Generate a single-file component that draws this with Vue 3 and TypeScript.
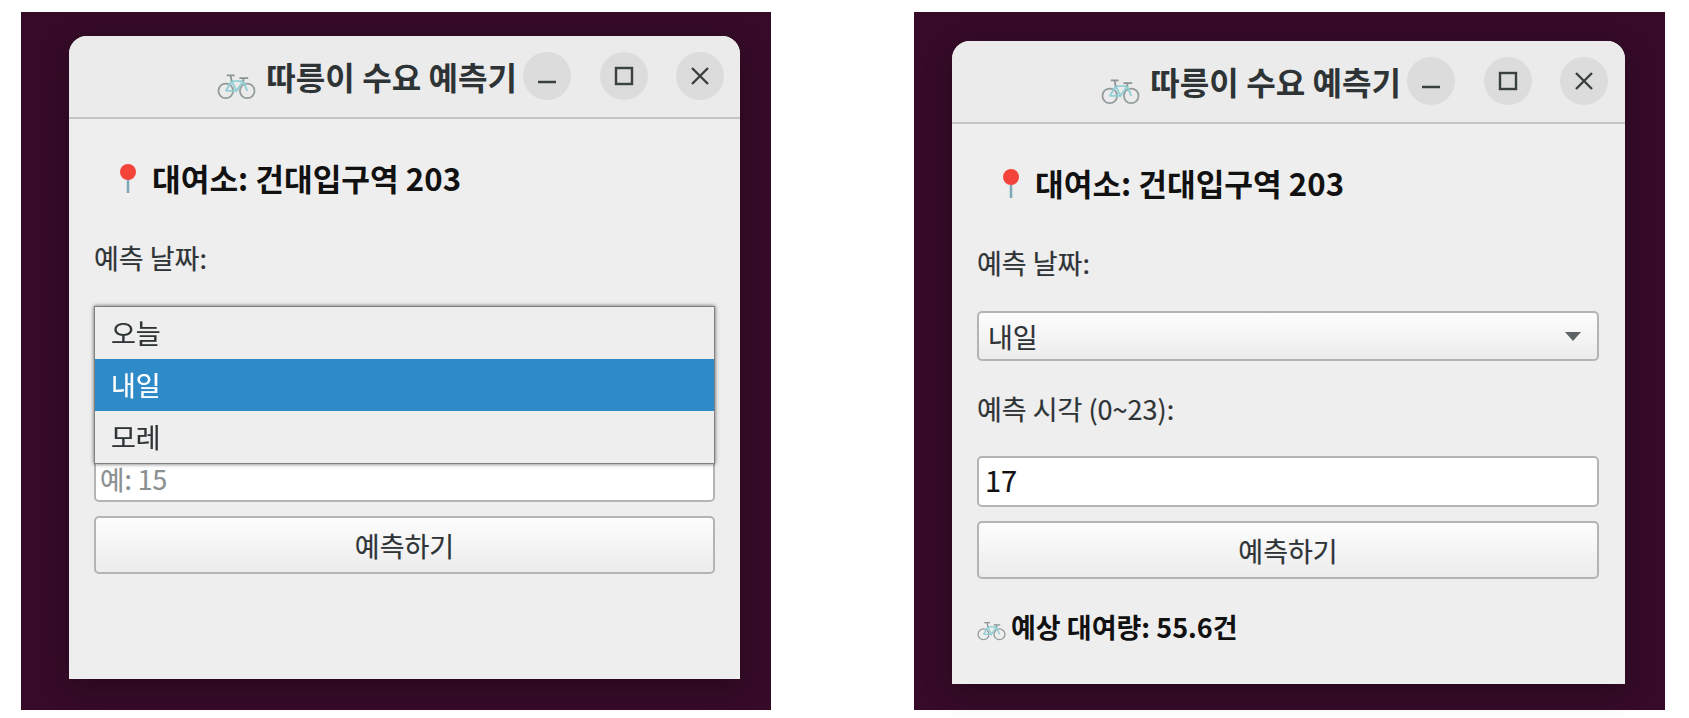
<template>
  <div class="page">
    <section
      v-for="panel in panels"
      :key="panel.id"
      class="desktop"
      :class="panel.id"
    >
      <div class="window">
        <header class="titlebar">
          <div class="title">
            <svg class="bike" viewBox="0 0 40 27">
              <circle class="wheel" cx="9" cy="18" r="7.5" />
              <circle class="wheel" cx="31" cy="18" r="7.5" />
              <path class="frame" d="M9 18 15 8H27L31 18M15 8 20 18 27 8M9 18H20" />
              <path class="bars" d="M10 2H18M14 2 15 8M23 5H32M27 5V8" />
            </svg>
            <span>따릉이 수요 예측기</span>
          </div>
          <div class="controls">
            <button class="control" aria-label="최소화">
              <svg viewBox="0 0 20 20"><path d="M1 16H19" /></svg>
            </button>
            <button class="control" aria-label="최대화">
              <svg viewBox="0 0 20 20"><rect x="2" y="2" width="16" height="16" /></svg>
            </button>
            <button class="control" aria-label="닫기">
              <svg viewBox="0 0 20 20"><path d="M2 2 18 18M18 2 2 18" /></svg>
            </button>
          </div>
        </header>

        <main class="content">
          <h1 class="station">
            <svg class="pin" viewBox="0 0 20 30">
              <path class="stem" d="M10 14V30" />
              <circle class="head" cx="10" cy="9" r="8" />
            </svg>
            <span>대여소: 건대입구역 203</span>
          </h1>

          <label class="label first">예측 날짜:</label>
          <div class="combo-wrap">
            <button class="combo">
              <span :class="{ covered: panel.open }">{{ panel.day }}</span>
              <i class="arrow"></i>
            </button>
            <ul v-if="panel.open" class="popup">
              <li
                v-for="day in days"
                :key="day"
                :class="{ selected: day === panel.day }"
              >
                {{ day }}
              </li>
            </ul>
          </div>

          <label class="label second" :class="{ covered: panel.open }">예측 시각 (0~23):</label>
          <input class="hour" :value="panel.hour" placeholder="예: 15" />
          <button class="predict">예측하기</button>

          <p v-if="panel.result" class="result">
            <svg class="bike small" viewBox="0 0 40 27">
              <circle class="wheel" cx="9" cy="18" r="7.5" />
              <circle class="wheel" cx="31" cy="18" r="7.5" />
              <path class="frame" d="M9 18 15 8H27L31 18M15 8 20 18 27 8M9 18H20" />
              <path class="bars" d="M10 2H18M14 2 15 8M23 5H32M27 5V8" />
            </svg>
            <span>{{ panel.result }}</span>
          </p>
        </main>
      </div>
    </section>
  </div>
</template>

<script setup lang="ts">
interface Panel {
  id: string
  day: string
  hour: string
  open: boolean
  result: string
}

const days: string[] = ['오늘', '내일', '모레']

const panels: Panel[] = [
  { id: 'before', day: '내일', hour: '', open: true, result: '' },
  { id: 'after', day: '내일', hour: '17', open: false, result: '예상 대여량: 55.6건' },
]
</script>

<style scoped>
.page {
  display: flex;
  justify-content: space-between;
  height: 718px;
  box-sizing: border-box;
  padding: 12px 24px 8px 21px;
  font-family: "Noto Sans CJK KR", "Noto Sans", sans-serif;
  font-size: 27px;
  color: #2e3436;
  -webkit-text-stroke: 0.2px;
  filter: blur(0.6px);
}

.desktop {
  box-sizing: border-box;
  background: #360b28;
}

.before {
  width: 750px;
  padding: 24px 0 0 48px;
}

.after {
  width: 751px;
  padding: 29px 0 0 38px;
}

.window {
  display: flex;
  flex-direction: column;
  height: 643px;
  border-radius: 18px 18px 0 0;
  background: #eeeeee;
  box-shadow: 0 8px 28px rgba(0, 0, 0, 0.28);
  overflow: hidden;
}

.before .window {
  width: 671px;
}

.after .window {
  width: 673px;
}

.titlebar {
  display: flex;
  justify-content: flex-end;
  align-items: center;
  gap: 6px;
  flex: none;
  height: 83px;
  box-sizing: border-box;
  padding: 0 16px 2px 0;
  background: #ebebeb;
  border-bottom: 2px solid #c4c4c4;
}

.after .titlebar {
  padding-right: 17px;
}

.title {
  display: flex;
  align-items: center;
  gap: 10px;
  font-size: 32.1px;
  font-weight: 700;
  -webkit-text-stroke: 0;
  line-height: 40px;
}

.bike {
  width: 39px;
  height: 27px;
  margin-top: 21px;
}

.bike.small {
  width: 29px;
  height: 20px;
  margin-top: 10px;
}

.wheel {
  fill: none;
  stroke: #949c9d;
  stroke-width: 1.8;
}

.frame {
  fill: none;
  stroke: #93cfd4;
  stroke-width: 2;
}

.bars {
  fill: none;
  stroke: #8b9394;
  stroke-width: 1.8;
}

.controls {
  display: flex;
  gap: 28.5px;
}

.control {
  display: flex;
  align-items: center;
  justify-content: center;
  width: 48px;
  height: 48px;
  padding: 0;
  border: 0;
  border-radius: 50%;
  background: #dcdcdc;
}

.control svg {
  width: 20px;
  height: 20px;
  fill: none;
  stroke: #3a3f40;
  stroke-width: 2.4;
}

.content {
  display: flex;
  flex-direction: column;
}

.before .content {
  padding: 38px 25px 0 25px;
}

.after .content {
  padding: 38px 26px 0 25px;
}

.station {
  display: flex;
  align-items: center;
  gap: 14px;
  height: 40px;
  margin: 0;
  padding-left: 24px;
  font-size: 31.2px;
  font-weight: 700;
  -webkit-text-stroke: 0;
  color: #111;
}

.pin {
  width: 20px;
  height: 30px;
  margin-top: 2px;
}

.stem {
  stroke: #7ba7b6;
  stroke-width: 2.5;
}

.head {
  fill: #f4433a;
}

.label {
  display: block;
  height: 40px;
  line-height: 40px;
}

.label.first {
  margin-top: 41px;
}

.label.second {
  margin-top: 28px;
}

.covered {
  visibility: hidden;
}

.combo-wrap {
  position: relative;
  margin-top: 28px;
}

.combo,
.predict {
  border: 2px solid #b4b4b4;
  border-radius: 5px;
  background: linear-gradient(#fdfdfd, #ececec);
  font: inherit;
  color: inherit;
}

.combo {
  display: flex;
  align-items: center;
  justify-content: space-between;
  width: 100%;
  height: 50px;
  padding: 0 16px 0 9px;
}

.arrow {
  width: 0;
  height: 0;
  border-left: 8px solid transparent;
  border-right: 8px solid transparent;
  border-top: 9px solid #5d6365;
}

.popup {
  position: absolute;
  top: 0;
  left: 0;
  right: 0;
  margin: 0;
  padding: 0;
  list-style: none;
  background: #eeeeee;
  border: 1px solid #7f7f7f;
  box-shadow: 0 0 4px rgba(0, 0, 0, 0.6);
}

.popup li {
  box-sizing: border-box;
  height: 52px;
  padding-left: 16px;
  line-height: 52px;
}

.popup li.selected {
  background: #2e8bc7;
  color: #fff;
}

.hour {
  box-sizing: border-box;
  width: 100%;
  height: 51px;
  margin-top: 27px;
  padding: 0 4px;
  border: 2px solid #b4b4b4;
  border-radius: 5px;
  background: #fff;
  font: inherit;
  font-size: 29px;
  color: #111;
  outline: none;
}

.after .hour {
  padding: 0 6px 5px;
}

.hour::placeholder {
  color: #8b8f90;
  opacity: 1;
  font-size: 26.5px;
}

.predict {
  height: 58px;
  margin-top: 14px;
  padding: 0;
}

.result {
  display: flex;
  align-items: center;
  gap: 5px;
  height: 34px;
  margin: 30px 0 0;
  font-weight: 700;
  -webkit-text-stroke: 0;
  color: #111;
  white-space: nowrap;
}
</style>

<style>
html,
body {
  background: #fff;
}
</style>
